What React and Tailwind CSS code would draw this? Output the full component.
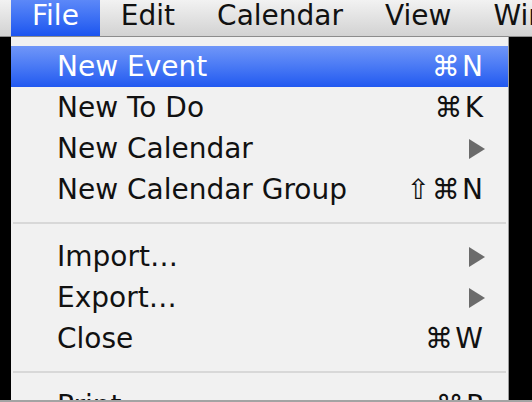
import React from "react";

const font = { fontFamily: '"DejaVu Sans", "Liberation Sans", sans-serif' };

const bar = ["File", "Edit", "Calendar", "View", "Window"];

const items = [
  { label: "New Event", key: "⌘N", active: true },
  { label: "New To Do", key: "⌘K" },
  { label: "New Calendar", sub: true },
  { label: "New Calendar Group", key: "⇧⌘N" },
  { sep: true },
  { label: "Import…", sub: true },
  { label: "Export…", sub: true },
  { label: "Close", key: "⌘W" },
  { sep: true },
  { label: "Print…", key: "⌘P" },
];

function Arrow() {
  return (
    <svg width="16" height="20" viewBox="0 0 16 20" className="shrink-0">
      <path d="M0 0 L16 10 L0 20 Z" fill="#6b6b6b" />
    </svg>
  );
}

export default function App() {
  return (
    <div style={font} className="w-[532px] h-[402px] overflow-hidden bg-black border-b-2 border-[#a3a3a3] flex flex-col text-[28px]">
      <div className="h-[37px] shrink-0 flex pl-[11px] bg-gradient-to-b from-[#f2f2f2] to-[#d2d2d2] border-b border-[#8c8c8c] whitespace-nowrap">
        {bar.map((b, i) => (
          <div
            key={b}
            className={
              "h-[36px] leading-[32px] px-[21px] " +
              (i === 0 ? "text-white bg-gradient-to-b from-[#5c88f8] to-[#1b54ef]" : "text-[#111]")
            }
          >
            {b}
          </div>
        ))}
      </div>
      <div className="flex-1 overflow-hidden pl-[11px]">
        <div className="w-[498px] h-full bg-[#f1f1f1] border-r border-[#9c9c9c] pt-[9px]">
          {items.map((it, i) =>
            it.sep ? (
              <div key={i} className="h-[26px] flex items-center px-[2px]">
                <div className="w-full h-[2px] bg-[#d8d8d8]" />
              </div>
            ) : (
              <div
                key={i}
                className={
                  "h-[41px] leading-[41px] flex items-center justify-between pl-[46px] pr-[23px] whitespace-nowrap " +
                  (it.active ? "text-white bg-gradient-to-b from-[#7096f8] to-[#2158f0]" : "text-[#111]")
                }
              >
                <span>{it.label}</span>
                {it.sub ? <Arrow /> : <span className="tracking-[2px]">{it.key}</span>}
              </div>
            )
          )}
        </div>
      </div>
    </div>
  );
}
